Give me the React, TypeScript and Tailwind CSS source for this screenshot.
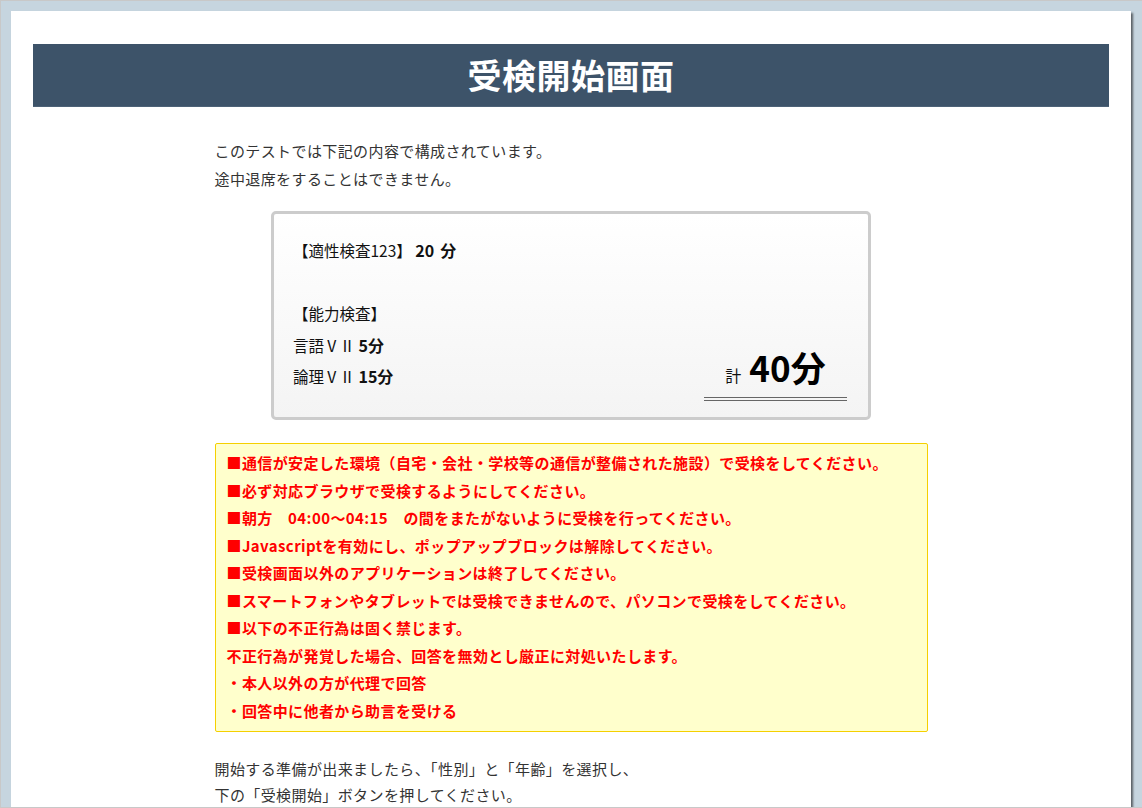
import React from "react";

const font = { fontFamily: '"Noto Sans CJK JP", "Noto Sans", sans-serif' };

const notices = [
  "■通信が安定した環境（自宅・会社・学校等の通信が整備された施設）で受検をしてください。",
  "■必ず対応ブラウザで受検するようにしてください。",
  "■朝方　04:00～04:15　の間をまたがないように受検を行ってください。",
  "■Javascriptを有効にし、ポップアップブロックは解除してください。",
  "■受検画面以外のアプリケーションは終了してください。",
  "■スマートフォンやタブレットでは受検できませんので、パソコンで受検をしてください。",
  "■以下の不正行為は固く禁じます。",
  "不正行為が発覚した場合、回答を無効とし厳正に対処いたします。",
  "・本人以外の方が代理で回答",
  "・回答中に他者から助言を受ける",
];

export default function App() {
  return (
    <div
      className="h-[808px] overflow-hidden bg-[#c6d5df] border-t border-l border-b border-[#c8c8c8] pt-[10px] pl-[10px] pr-[11px]"
      style={font}
    >
      <div className="h-full bg-white shadow-[2px_2px_2px_rgba(0,0,0,0.55)] pt-[33px] px-[22px]">
        <div className="h-[63px] bg-[#3d5369] border-b border-[#4d6277] flex items-center justify-center">
          <h1 className="text-white text-[34px] font-bold leading-none tracking-[0.5px]">受検開始画面</h1>
        </div>

        <div className="w-[713px] mx-auto text-[15px] text-[#333] tracking-[0.4px]">
          <div className="pt-[30px] leading-[28px]">
            <p>このテストでは下記の内容で構成されています。</p>
            <p>途中退席をすることはできません。</p>
          </div>

          <div className="mt-[18px] mx-auto w-[600px] h-[209px] border-[3px] border-[#cccccc] rounded-[5px] bg-gradient-to-b from-white to-[#f4f4f4] flex justify-between items-end pl-[19px] pr-[21px] text-[#111] tracking-normal">
            <div className="self-start pt-[21px] leading-[31.5px] text-[15.5px]">
              <p>
                【適性検査123】&nbsp;<span className="font-bold text-[16px]">20<span className="ml-[6px]">分</span></span>
              </p>
              <p>&nbsp;</p>
              <p>【能力検査】</p>
              <p>
                言語ⅤⅡ <span className="font-bold text-[16px]">5分</span>
              </p>
              <p>
                論理ⅤⅡ <span className="font-bold text-[16px]">15分</span>
              </p>
            </div>
            <div className="mb-[16px] w-[143px] text-center pb-[10px] border-b-4 border-double border-[#666]">
              <span className="text-[16px] align-baseline mr-[8px]">計</span>
              <span className="text-[35px] font-bold leading-[40px] text-black">40分</span>
            </div>
          </div>

          <div className="mt-[23px] bg-[#ffffcc] border border-[#f5d000] rounded-[2px] pl-[11px] pt-[5px] pb-[7px] text-[#ff0000] font-bold leading-[27.5px]">
            {notices.map((n) => (
              <p key={n}>{n}</p>
            ))}
          </div>

          <div className="mt-[24px] leading-[26px]">
            <p>開始する準備が出来ましたら、「性別」と「年齢」を選択し、</p>
            <p>下の「受検開始」ボタンを押してください。</p>
          </div>
        </div>
      </div>
    </div>
  );
}
